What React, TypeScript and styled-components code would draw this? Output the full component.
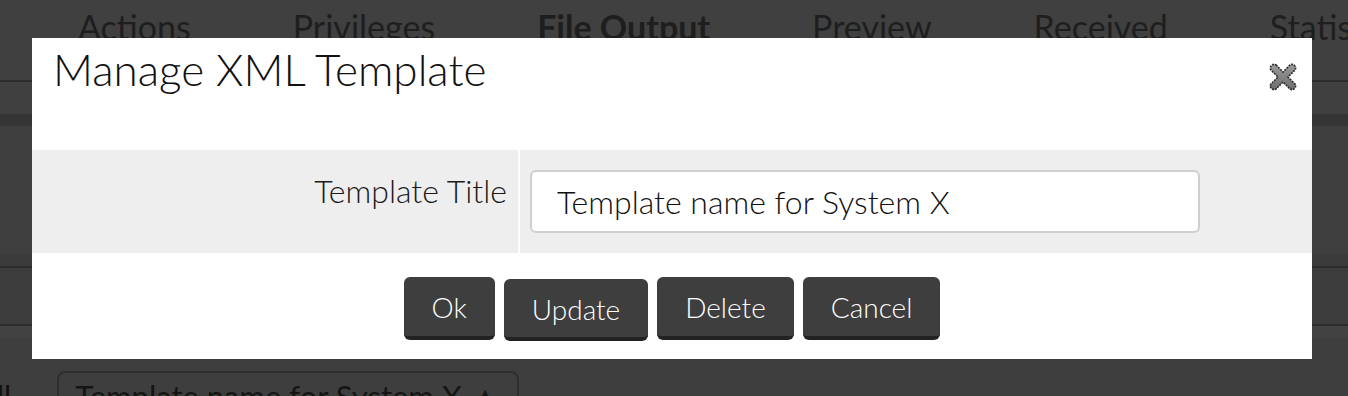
import React from 'react';
import styled, { createGlobalStyle } from 'styled-components';

const TABS = ['Actions', 'Privileges', 'File Output', 'Preview', 'Received', 'Statistics'];
const BUTTONS = ['Ok', 'Update', 'Delete', 'Cancel'];

const GlobalStyle = createGlobalStyle`
    html, body {
        margin: 0;
        padding: 0;
        background: #3e3e3e;
        font-family: Lato, "Open Sans", sans-serif;
        overflow: hidden;
    }
`;

const App: React.FC = () => {
    return (
        <Page>
            <GlobalStyle />
            <TabBar>
                {TABS.map((t) => (
                    <Tab key={t} active={t === 'File Output'}>
                        {t}
                    </Tab>
                ))}
            </TabBar>
            <Band h={32} tone="#404040" />
            <Band h={12} tone="#353535" />
            <Band h={128} tone="#3f3f3f" />
            <Band h={12} tone="#3b3b3b" />
            <Rule />
            <Band h={56} tone="#3c3c3c" />
            <Rule />
            <Band h={12} tone="#424242" />
            <SelectRow>
                <RowLabel>ll</RowLabel>
                <FakeSelect>Template name for System X &#9650;</FakeSelect>
            </SelectRow>

            <Modal>
                <ModalHeader>
                    <Title>Manage XML Template</Title>
                    <CloseButton aria-label="close">
                        <svg width="30" height="30" viewBox="0 0 30 30">
                            <defs>
                                <linearGradient id="xg" x1="0" y1="0" x2="0" y2="1">
                                    <stop offset="0" stopColor="#9a9a9a" />
                                    <stop offset="1" stopColor="#6e6e6e" />
                                </linearGradient>
                            </defs>
                            <path
                                d="M8 3 L15 10 L22 3 Q24.5 1.5 26.5 3.5 Q28.5 5.5 27 8 L20 15 L27 22 Q28.5 24.5 26.5 26.5 Q24.5 28.5 22 27 L15 20 L8 27 Q5.5 28.5 3.5 26.5 Q1.5 24.5 3 22 L10 15 L3 8 Q1.5 5.5 3.5 3.5 Q5.5 1.5 8 3 Z"
                                fill="url(#xg)"
                                stroke="#2a2a2a"
                                strokeWidth="1.6"
                                strokeDasharray="2 1"
                            />
                        </svg>
                    </CloseButton>
                </ModalHeader>
                <FormRow>
                    <LabelCell>Template Title</LabelCell>
                    <InputCell>
                        <TextInput defaultValue="Template name for System X" />
                    </InputCell>
                </FormRow>
                <Footer>
                    {BUTTONS.map((b) => (
                        <ActionButton key={b} pressed={b === 'Update'}>
                            {b}
                        </ActionButton>
                    ))}
                </Footer>
            </Modal>
        </Page>
    );
};

const Page = styled.div`
    position: relative;
    width: 1348px;
    height: 396px;
    overflow: hidden;
    background: #3e3e3e;
`;

const TabBar = styled.div`
    display: flex;
    height: 82px;
    padding-left: 27px;
    border-bottom: 2px solid #2c2c2c;
    background: #404040;
    box-sizing: border-box;
`;

const Tab = styled.div<{ active?: boolean }>`
    padding: 6px 51px 0;
    font-size: 34px;
    color: #1e1e1e;
    font-weight: ${(p) => (p.active ? 700 : 400)};
    white-space: nowrap;
`;

const Band = styled.div<{ h: number; tone: string }>`
    height: ${(p) => p.h}px;
    background: ${(p) => p.tone};
`;

const Rule = styled.div`
    height: 2px;
    background: #2c2c2c;
`;

const SelectRow = styled.div`
    display: flex;
    align-items: flex-start;
    gap: 46px;
    padding-top: 33px;
`;

const RowLabel = styled.div`
    font-size: 30px;
    color: #111;
    margin-left: -3px;
    padding-top: 7px;
`;

const FakeSelect = styled.div`
    width: 462px;
    height: 48px;
    box-sizing: border-box;
    border: 2px solid #2f2f2f;
    border-radius: 8px;
    padding: 4px 16px 0;
    font-size: 31px;
    color: #151515;
    white-space: nowrap;
    overflow: hidden;
`;

const Modal = styled.div`
    position: absolute;
    left: 32px;
    top: 38px;
    width: 1280px;
    height: 321px;
    background: #fff;
    display: flex;
    flex-direction: column;
`;

const ModalHeader = styled.div`
    height: 112px;
    display: flex;
    justify-content: space-between;
    align-items: flex-start;
    padding: 5px 14px 0 21px;
    box-sizing: border-box;
`;

const Title = styled.h1`
    margin: 0;
    font-size: 44px;
    font-weight: 300;
    color: #111;
`;

const CloseButton = styled.div`
    margin-top: 19px;
    width: 30px;
    height: 30px;
`;

const FormRow = styled.div`
    display: grid;
    grid-template-columns: 488px 1fr;
    height: 103px;
    background: #eeeeee;
`;

const LabelCell = styled.div`
    text-align: right;
    padding: 21px 11px 0 0;
    font-size: 32px;
    font-weight: 300;
    color: #1a1a1a;
    border-right: 2px solid #fff;
`;

const InputCell = styled.div`
    padding: 20px 0 0 10px;
`;

const TextInput = styled.input`
    width: 670px;
    height: 63px;
    box-sizing: border-box;
    border: 2px solid #cfcfcf;
    border-radius: 6px;
    background: #fff;
    padding: 0 25px;
    font-family: Lato, "Open Sans", sans-serif;
    font-size: 32px;
    font-weight: 300;
    color: #111;
    outline: none;
`;

const Footer = styled.div`
    display: flex;
    justify-content: center;
    align-items: flex-start;
    gap: 9px;
    padding-top: 24px;
`;

const ActionButton = styled.button<{ pressed?: boolean }>`
    height: ${(p) => (p.pressed ? 62 : 63)}px;
    margin-top: ${(p) => (p.pressed ? 2 : 0)}px;
    padding: 1px 28px 0;
    background: #3e3e3e;
    color: #fff;
    border: none;
    border-bottom: 4px solid #222;
    border-radius: 6px;
    font-family: Lato, "Open Sans", sans-serif;
    font-size: 28px;
    font-weight: 300;
    cursor: pointer;
`;

export default App;
